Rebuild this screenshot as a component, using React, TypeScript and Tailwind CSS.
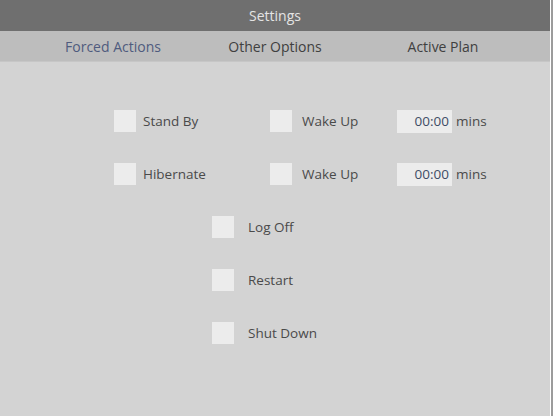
import React from "react";

const font = { fontFamily: '"Open Sans", "Noto Sans", sans-serif' };

function Box() {
  return <div className="w-[22px] h-[22px] bg-[#ececec] shrink-0" />;
}

function TimeInput() {
  return (
    <div className="w-[55px] h-[23px] bg-[#ececec] flex items-center justify-end pr-[3px] text-[#3e4d66]">
      00:00
    </div>
  );
}

function PlanRow({ label }: { label: string }) {
  return (
    <div className="flex items-center h-[22px] pl-[114px]">
      <Box />
      <div className="ml-[7px] w-[127px]">{label}</div>
      <Box />
      <div className="ml-[10px] w-[95px]">Wake Up</div>
      <TimeInput />
      <div className="ml-[4px]">mins</div>
    </div>
  );
}

function SimpleRow({ label }: { label: string }) {
  return (
    <div className="flex items-center h-[22px] pl-[212px]">
      <Box />
      <div className="ml-[14px]">{label}</div>
    </div>
  );
}

export default function App() {
  return (
    <div className="w-[553px] h-[416px] flex text-[13.5px] text-[#4a4a4a]" style={font}>
      <div className="w-[550px] flex flex-col">
        <div className="h-[31px] bg-[#6f6f6f] flex items-center justify-center text-[#e4e4e4] text-[14px]">
          Settings
        </div>
        <div className="h-[31px] bg-[#bdbdbd] border-b border-[#c6c6c6] flex items-center pl-[32px] text-[14px]">
          <div className="w-[162px] text-center text-[#4f5b7e]">Forced Actions</div>
          <div className="w-[162px] text-center text-[#404040]">Other Options</div>
          <div className="w-[174px] text-center text-[#404040]">Active Plan</div>
        </div>
        <div className="flex-1 bg-[#d3d3d3] flex flex-col pt-[48px] gap-[31px]">
          <PlanRow label="Stand By" />
          <PlanRow label="Hibernate" />
          <SimpleRow label="Log Off" />
          <SimpleRow label="Restart" />
          <SimpleRow label="Shut Down" />
        </div>
      </div>
      <div className="w-px bg-white" />
      <div className="w-[2px] bg-[#9c9c9c]" />
    </div>
  );
}
